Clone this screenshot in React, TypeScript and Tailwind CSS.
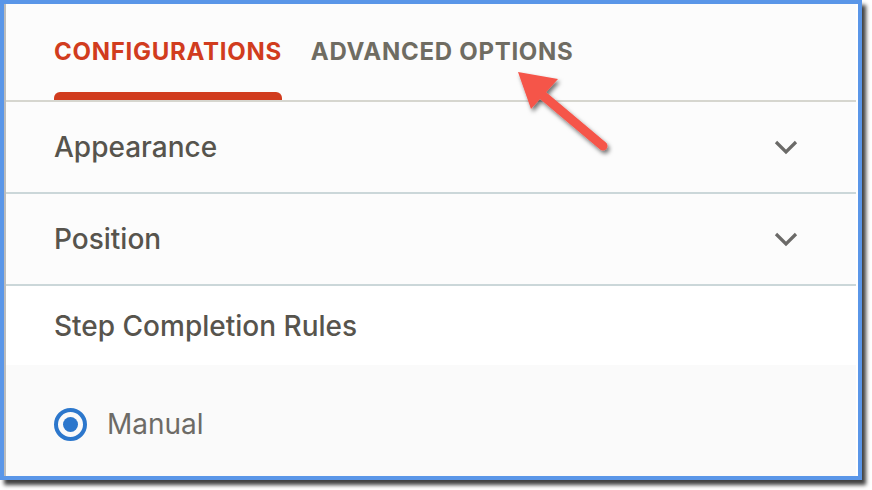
import React from "react";

function Chevron() {
  return (
    <svg width="24" height="16" viewBox="0 0 24 16" className="block">
      <path d="M2 3 L12 13 L22 3" fill="none" stroke="#6b6a68" strokeWidth="3.2" strokeLinecap="butt" strokeLinejoin="miter" />
    </svg>
  );
}

export default function App() {
  return (
    <div className="relative w-[872px] h-[490px] bg-white" style={{ fontFamily: "Inter, 'Noto Sans', sans-serif" }}>
      <div className="w-[862px] h-[480px] border-4 border-[#5a96e8] bg-white flex shadow-[4px_5px_4px_rgba(0,0,0,0.75)]">
        <div className="flex-1 mr-[2px] border-l-2 border-[#bcbcbc] bg-[#fcfcfc] flex flex-col">
          {/* Tabs */}
          <div className="h-[98px] flex pl-[48px] gap-[29px] border-b-2 border-[#d6d6cf]">
            <div className="flex flex-col">
              <div className="flex-1 flex items-center pt-[7px] text-[24px] font-bold tracking-[0.03em] text-[#d13c1e]">
                CONFIGURATIONS
              </div>
              <div className="h-[8px] rounded-t-[6px] bg-[#d13c1e]" />
            </div>
            <div className="flex flex-col">
              <div className="flex-1 flex items-center pt-[7px] text-[24px] font-bold tracking-[0.03em] text-[#6f6c62]">
                ADVANCED OPTIONS
              </div>
              <div className="h-[8px]" />
            </div>
          </div>
          {/* Appearance */}
          <div className="h-[92px] flex items-center justify-between pl-[48px] pr-[58px] border-b-2 border-[#cbd7d9]">
            <span className="text-[28px] font-medium text-[#57544d]">Appearance</span>
            <Chevron />
          </div>
          {/* Position */}
          <div className="h-[92px] flex items-center justify-between pl-[48px] pr-[58px] border-b-2 border-[#cbd7d9]">
            <span className="text-[28px] font-medium text-[#57544d]">Position</span>
            <Chevron />
          </div>
          {/* Step Completion Rules */}
          <div className="h-[79px] flex items-center pl-[48px] bg-white">
            <span className="text-[28px] font-medium text-[#57544d]">Step Completion Rules</span>
          </div>
          <div className="flex-1 bg-[#fafafa] pl-[48px] pt-[38px]">
            <div className="flex items-center gap-[20px]">
              <div className="w-[33px] h-[33px] rounded-full border-[4px] border-[#2c77cc] flex items-center justify-center">
                <div className="w-[15px] h-[15px] rounded-full bg-[#2c77cc]" />
              </div>
              <span className="text-[28px] text-[#6d6b66]">Manual</span>
            </div>
          </div>
        </div>
      </div>
      {/* Annotation arrow */}
      <svg className="absolute left-0 top-0 pointer-events-none" width="872" height="490">
        <defs>
          <filter id="sh" x="-20%" y="-20%" width="140%" height="140%">
            <feDropShadow dx="2" dy="3" stdDeviation="2" floodColor="#000" floodOpacity="0.55" />
          </filter>
        </defs>
        <g filter="url(#sh)">
          <line x1="540" y1="93" x2="603" y2="146" stroke="#f5544a" strokeWidth="9" strokeLinecap="round" />
          <polygon points="518,72 558,79 531,109" fill="#f5544a" />
        </g>
      </svg>
    </div>
  );
}
